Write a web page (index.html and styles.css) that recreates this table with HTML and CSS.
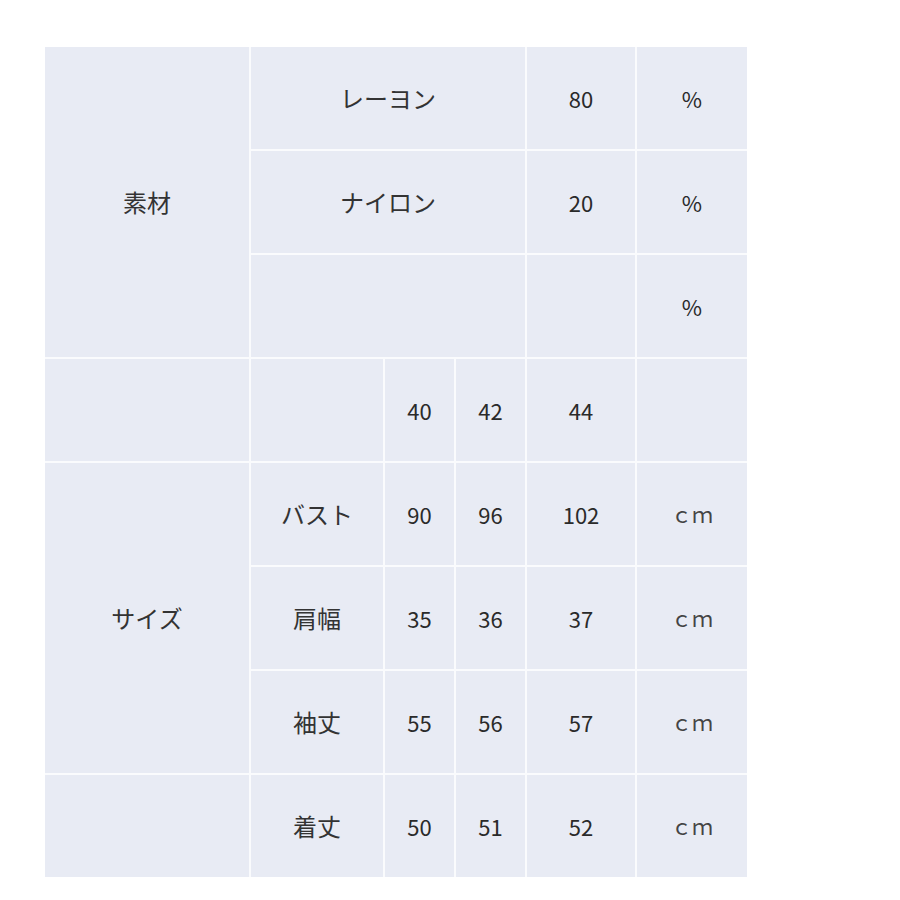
FILE: index.html
```html
<!DOCTYPE html>
<html lang="ja">
<head>
<meta charset="utf-8">
<link rel="stylesheet" href="styles.css">
</head>
<body>
<div class="spec">
  <div class="cell c1 r1-3 jp">素材</div>
  <div class="cell span3 jp">レーヨン</div>
  <div class="cell">80</div>
  <div class="cell pct">%</div>

  <div class="cell span3 jp">ナイロン</div>
  <div class="cell">20</div>
  <div class="cell pct">%</div>

  <div class="cell span3"></div>
  <div class="cell"></div>
  <div class="cell pct">%</div>

  <div class="cell"></div>
  <div class="cell"></div>
  <div class="cell">40</div>
  <div class="cell">42</div>
  <div class="cell">44</div>
  <div class="cell"></div>

  <div class="cell c1 r5-7 jp">サイズ</div>
  <div class="cell jp">バスト</div>
  <div class="cell">90</div>
  <div class="cell">96</div>
  <div class="cell">102</div>
  <div class="cell unit">ｃｍ</div>

  <div class="cell jp">肩幅</div>
  <div class="cell">35</div>
  <div class="cell">36</div>
  <div class="cell">37</div>
  <div class="cell unit">ｃｍ</div>

  <div class="cell jp">袖丈</div>
  <div class="cell">55</div>
  <div class="cell">56</div>
  <div class="cell">57</div>
  <div class="cell unit">ｃｍ</div>

  <div class="cell"></div>
  <div class="cell jp">着丈</div>
  <div class="cell">50</div>
  <div class="cell">51</div>
  <div class="cell">52</div>
  <div class="cell unit">ｃｍ</div>
</div>
</body>
</html>
```

FILE: styles.css
```css
html, body {
  margin: 0;
  padding: 0;
  background: #ffffff;
}

body {
  padding: 47px 0 0 45px;
  font-family: "Noto Sans CJK JP", "Noto Sans", sans-serif;
  color: #2a2a2a;
}

.spec {
  display: grid;
  width: 702px;
  grid-template-columns: 204px 132px 69px 69px 108px 110px;
  grid-template-rows: repeat(8, 102px);
  gap: 2px;
  background: #fafbfd;
}

.cell {
  background: #e8ebf4;
  display: flex;
  align-items: center;
  justify-content: center;
  font-size: 22px;
  line-height: 1;
}

.jp {
  font-size: 24px;
  color: #333333;
}

.pct {
  font-size: 22px;
}

.unit {
  font-size: 21px;
  color: #444444;
}

.span3 {
  grid-column: span 3;
}

.r1-3 {
  grid-row: 1 / 4;
}

.r5-7 {
  grid-row: 5 / 8;
}

.c1 {
  grid-column: 1;
}
```
